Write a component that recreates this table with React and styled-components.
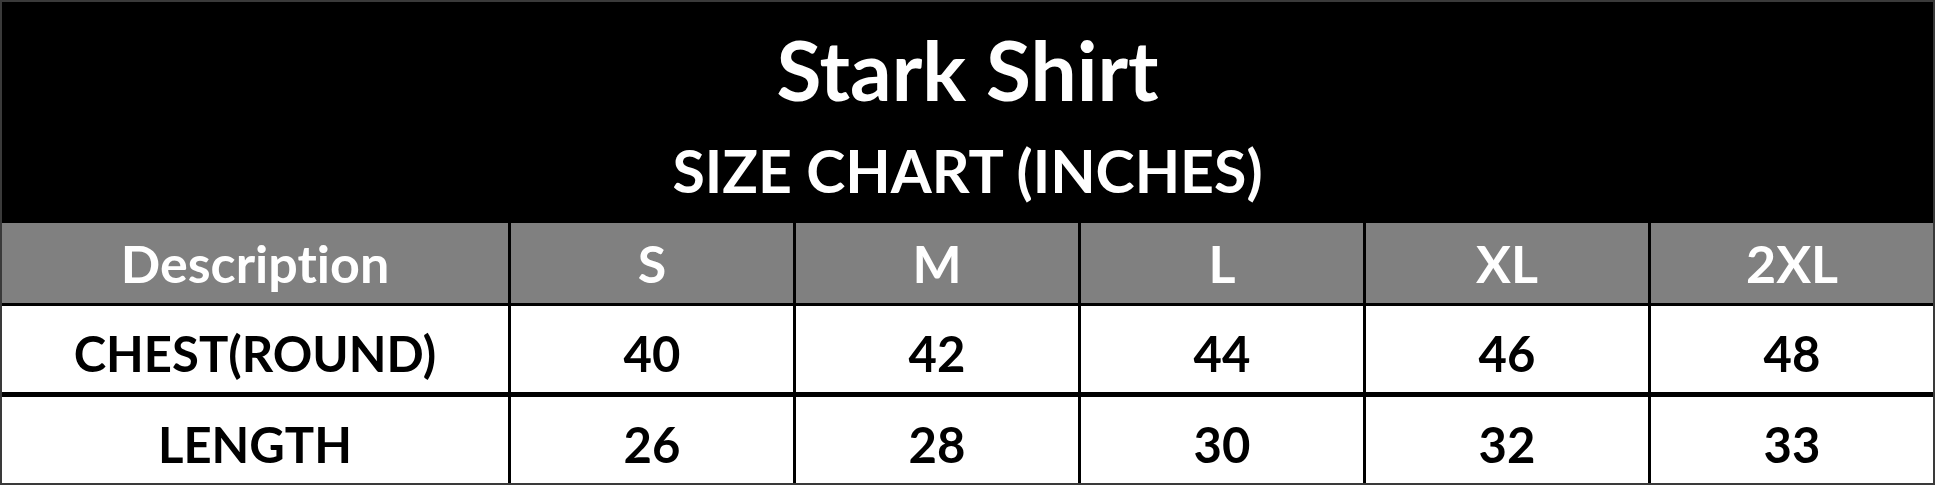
import React from "react";
import styled, { createGlobalStyle } from "styled-components";

const sizes = ["S", "M", "L", "XL", "2XL"];

const rows = [
  { label: "CHEST(ROUND)", values: [40, 42, 44, 46, 48], rule: 3 },
  { label: "LENGTH", values: [26, 28, 30, 32, 33], rule: 5 },
];

const GlobalStyle = createGlobalStyle`
  html, body {
    margin: 0;
    padding: 0;
    background: #ffffff;
  }
  * {
    box-sizing: border-box;
  }
`;

function App() {
  return (
    <>
      <GlobalStyle />
      <Chart>
        <Banner>
          <Title>Stark Shirt</Title>
          <Subtitle>SIZE CHART (INCHES)</Subtitle>
        </Banner>

        <Row $rule={1} $height={80}>
          <HeadCell>Description</HeadCell>
          {sizes.map((s) => (
            <HeadCell key={s}>{s}</HeadCell>
          ))}
        </Row>

        {rows.map((r) => (
          <Row key={r.label} $rule={r.rule} $height={86}>
            <BodyCell>{r.label}</BodyCell>
            {r.values.map((v, i) => (
              <BodyCell key={i}>{v}</BodyCell>
            ))}
          </Row>
        ))}
      </Chart>
    </>
  );
}

const Chart = styled.div`
  width: 1935px;
  height: 485px;
  border: 2px solid #3a3a3a;
  background: #000000;
  font-family: Lato, "Open Sans", "Liberation Sans", sans-serif;
  font-weight: 700;
  font-variant-ligatures: none;
  display: flex;
  flex-direction: column;
`;

const Banner = styled.div`
  height: 220px;
  background: #000000;
  color: #ffffff;
  display: flex;
  flex-direction: column;
  align-items: center;
  padding-top: 26px;
`;

const Title = styled.div`
  font-size: 82px;
  line-height: 1;
`;

const Subtitle = styled.div`
  font-size: 59px;
  line-height: 1;
  margin-top: 31px;
`;

const Row = styled.div`
  display: grid;
  grid-template-columns: 506px repeat(5, 1fr);
  column-gap: 3px;
  background: #000000;
  border-top: ${(p) => p.$rule}px solid #000000;
  height: ${(p) => p.$height + p.$rule}px;
`;

const Cell = styled.div`
  display: flex;
  align-items: center;
  justify-content: center;
  line-height: 1;
`;

const HeadCell = styled(Cell)`
  background: #808080;
  color: #ffffff;
  font-size: 52px;
`;

const BodyCell = styled(Cell)`
  background: #ffffff;
  color: #000000;
  font-size: 49px;
  padding-top: 8px;
`;

export default App;
